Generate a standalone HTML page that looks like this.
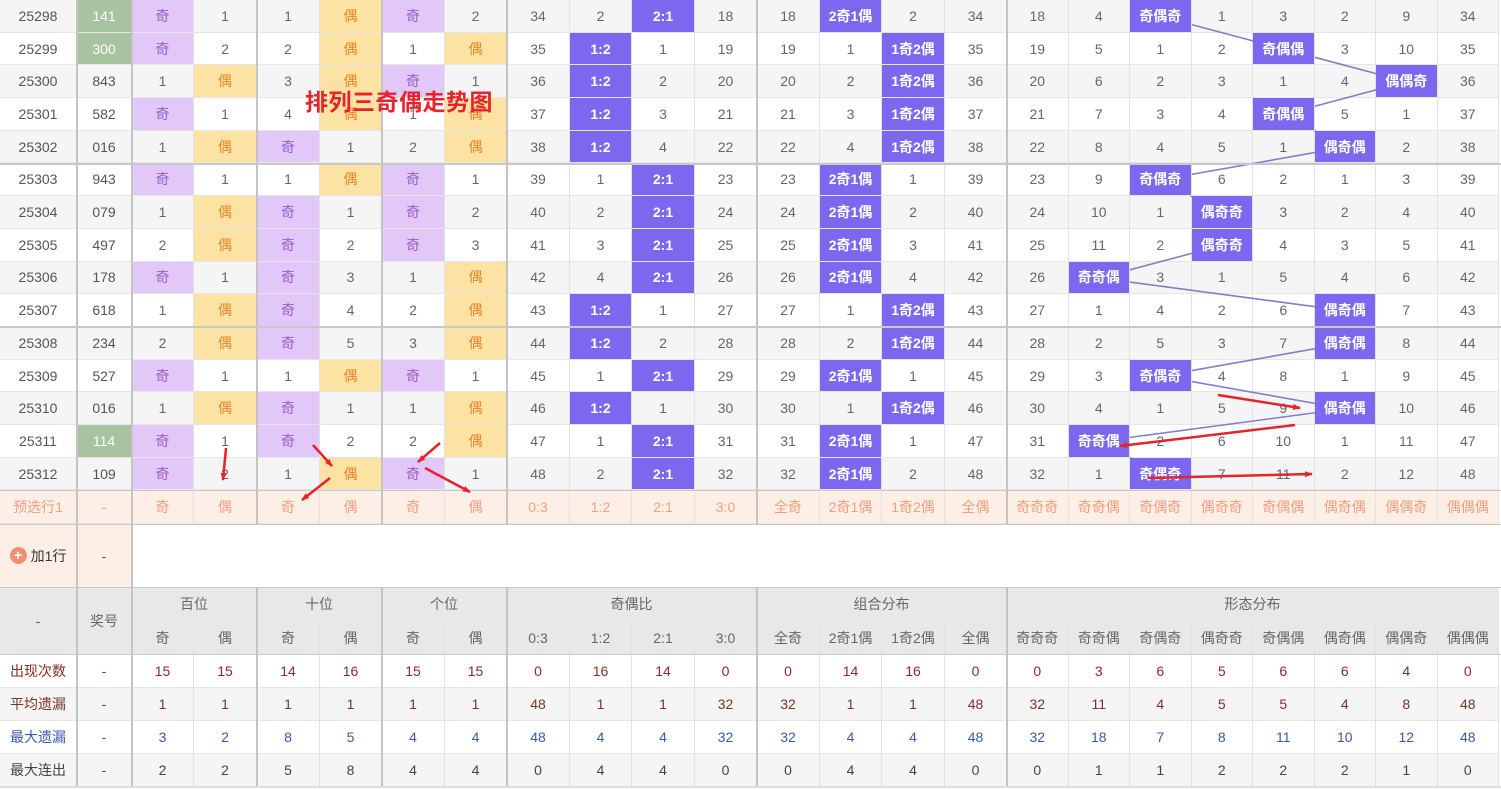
<!DOCTYPE html><html><head><meta charset="utf-8"><style>
body{margin:0;width:1501px;height:789px;overflow:hidden;background:#fff;font-family:"Liberation Sans","Noto Sans CJK SC",sans-serif;font-size:14px;color:#666;position:relative}
.c{position:absolute;box-sizing:border-box;display:flex;align-items:center;justify-content:center;border-right:1px solid #e2e2e2;border-bottom:1px solid #e6e6e6;white-space:nowrap}
.vl{position:absolute;width:2px;background:#c4c4c4}
.hl{position:absolute;height:2px;background:#c8c8c8}
</style></head><body>
<div id="t"></div>
<svg id="ln" width="1501" height="789" style="position:absolute;left:0;top:0;z-index:2"></svg>
<div style="position:absolute;left:305px;top:83px;color:#e8222a;font-weight:bold;font-size:23px;letter-spacing:0.5px;z-index:6">排列三奇偶走势图</div>
<svg width="1501" height="789" style="position:absolute;left:0;top:0;z-index:7">
<defs><marker id="a" markerWidth="8" markerHeight="6" refX="7" refY="3" orient="auto" markerUnits="userSpaceOnUse"><path d="M0,0L8,3L0,6z" fill="#e8222a"/></marker></defs>
<g stroke="#e8222a" stroke-width="2.5" fill="none" marker-end="url(#a)">
<line x1="226" y1="448" x2="223" y2="480"/>
<line x1="313" y1="445" x2="332" y2="466"/>
<line x1="330" y1="478" x2="302" y2="500"/>
<line x1="440" y1="443" x2="418" y2="462"/>
<line x1="425" y1="468" x2="470" y2="492"/>
<line x1="1218" y1="395" x2="1300" y2="408"/>
<line x1="1295" y1="425" x2="1120" y2="446"/>
<line x1="1148" y1="478" x2="1312" y2="474"/>
</g></svg>
<script>
var T=document.getElementById('t'),H='';
var X=[0,77,132,194,257,320,382,445,507,570,632,695,757,820,882,945,1007];
for(var i=1;i<=8;i++)X.push(1007+61.5*i);
function cell(x,y,w,h,txt,bg,col,ex){H+='<div class="c" style="left:'+x+'px;top:'+y+'px;width:'+w+'px;height:'+h+'px;'+(bg?'background:'+bg+';':'')+(col?'color:'+col+';':'')+(ex||'')+'">'+txt+'</div>';}
var D=[
["25298","141","奇,1,1,偶,奇,2,34,2,*2:1,18,18,*2奇1偶,2,34,18,4,*奇偶奇,1,3,2,9,34"],
["25299","300","奇,2,2,偶,1,偶,35,*1:2,1,19,19,1,*1奇2偶,35,19,5,1,2,*奇偶偶,3,10,35"],
["25300","843","1,偶,3,偶,奇,1,36,*1:2,2,20,20,2,*1奇2偶,36,20,6,2,3,1,4,*偶偶奇,36"],
["25301","582","奇,1,4,偶,1,偶,37,*1:2,3,21,21,3,*1奇2偶,37,21,7,3,4,*奇偶偶,5,1,37"],
["25302","016","1,偶,奇,1,2,偶,38,*1:2,4,22,22,4,*1奇2偶,38,22,8,4,5,1,*偶奇偶,2,38"],
["25303","943","奇,1,1,偶,奇,1,39,1,*2:1,23,23,*2奇1偶,1,39,23,9,*奇偶奇,6,2,1,3,39"],
["25304","079","1,偶,奇,1,奇,2,40,2,*2:1,24,24,*2奇1偶,2,40,24,10,1,*偶奇奇,3,2,4,40"],
["25305","497","2,偶,奇,2,奇,3,41,3,*2:1,25,25,*2奇1偶,3,41,25,11,2,*偶奇奇,4,3,5,41"],
["25306","178","奇,1,奇,3,1,偶,42,4,*2:1,26,26,*2奇1偶,4,42,26,*奇奇偶,3,1,5,4,6,42"],
["25307","618","1,偶,奇,4,2,偶,43,*1:2,1,27,27,1,*1奇2偶,43,27,1,4,2,6,*偶奇偶,7,43"],
["25308","234","2,偶,奇,5,3,偶,44,*1:2,2,28,28,2,*1奇2偶,44,28,2,5,3,7,*偶奇偶,8,44"],
["25309","527","奇,1,1,偶,奇,1,45,1,*2:1,29,29,*2奇1偶,1,45,29,3,*奇偶奇,4,8,1,9,45"],
["25310","016","1,偶,奇,1,1,偶,46,*1:2,1,30,30,1,*1奇2偶,46,30,4,1,5,9,*偶奇偶,10,46"],
["25311","114","奇,1,奇,2,2,偶,47,1,*2:1,31,31,*2奇1偶,1,47,31,*奇奇偶,2,6,10,1,11,47"],
["25312","109","奇,2,1,偶,奇,1,48,2,*2:1,32,32,*2奇1偶,2,48,32,1,*奇偶奇,7,11,2,12,48"]];
var RH=32.7,pts=[];
D.forEach(function(r,i){var y=i*RH,bg=i%2?'#fff':'#f5f5f5';
cell(0,y,77,RH,r[0],bg,'#555');
var g=(r[0]=='25298'||r[0]=='25299'||r[0]=='25311');
cell(77,y,55,RH,r[1],g?'#a8c3a0':bg,g?'#fff':'#555');
r[2].split(',').forEach(function(v,j){var x=X[j+2],w=X[j+3]-x;
if(v[0]=='*'){cell(x,y,w,RH,v.slice(1),'#7b68ee','#fff','font-weight:bold;z-index:3;');if(j>=14)pts.push([x+w/2,y+RH/2]);}
else if(v=='奇'&&j<6)cell(x,y,w,RH,v,'#e2c8f8','#9a5cc8');
else if(v=='偶'&&j<6)cell(x,y,w,RH,v,'#fde3a3','#e8852a');
else cell(x,y,w,RH,v,bg,'#666');});});
var y0=15*RH;
cell(0,y0,77,33,'预选行1','#fdeee6','#f0a080');cell(77,y0,55,33,'-','#fdeee6','#f0a080');
"奇,偶,奇,偶,奇,偶,0:3,1:2,2:1,3:0,全奇,2奇1偶,1奇2偶,全偶,奇奇奇,奇奇偶,奇偶奇,偶奇奇,奇偶偶,偶奇偶,偶偶奇,偶偶偶".split(',').forEach(function(v,j){cell(X[j+2],y0,X[j+3]-X[j+2],33,v,'#fdeee6','#f0a080');});
var y1=y0+34;
cell(0,y1,77,63,'<span style="display:inline-block;width:17px;height:17px;border-radius:50%;background:#f09070;color:#fff;font-weight:bold;line-height:17px;text-align:center;margin-right:4px">+</span><span style="color:#333">加1行</span>','#fdeee6','#333');
cell(77,y1,55,63,'-','#fdeee6','#555');
var y2=588;
cell(0,y2,77,67,'-','#e8e8e8','#555');cell(77,y2,55,67,'奖号','#e8e8e8','#666');
[['百位',2,4],['十位',4,6],['个位',6,8],['奇偶比',8,12],['组合分布',12,16],['形态分布',16,24]].forEach(function(g){cell(X[g[1]],y2,X[g[2]]-X[g[1]],33,g[0],'#e8e8e8','#666');});
"奇,偶,奇,偶,奇,偶,0:3,1:2,2:1,3:0,全奇,2奇1偶,1奇2偶,全偶,奇奇奇,奇奇偶,奇偶奇,偶奇奇,奇偶偶,偶奇偶,偶偶奇,偶偶偶".split(',').forEach(function(v,j){cell(X[j+2],y2+33,X[j+3]-X[j+2],34,v,'#e8e8e8','#666');});
var S=[['出现次数','#8b2a2a','15,15,14,16,15,15,0,16,14,0,0,14,16,0,0,3,6,5,6,6,4,0'],
['平均遗漏','#7a3328','1,1,1,1,1,1,48,1,1,32,32,1,1,48,32,11,4,5,5,4,8,48'],
['最大遗漏','#3a5aa8','3,2,8,5,4,4,48,4,4,32,32,4,4,48,32,18,7,8,11,10,12,48'],
['最大连出','#444','2,2,5,8,4,4,0,4,4,0,0,4,4,0,0,1,1,2,2,2,1,0']];
S.forEach(function(s,i){var y=655+i*33,bg=i%2?'#f5f5f5':'#fff';cell(0,y,77,33,s[0],bg,s[1]);cell(77,y,55,33,'-',bg,s[1]);
s[2].split(',').forEach(function(v,j){cell(X[j+2],y,X[j+3]-X[j+2],33,v,bg,s[1]);});});
[76,131].forEach(function(x){H+='<div class="vl" style="left:'+x+'px;top:0;height:787px;z-index:4"></div>';});
[256,381,506,756,1006].forEach(function(x){H+='<div class="vl" style="left:'+x+'px;top:0;height:'+(y0+33)+'px;z-index:4"></div><div class="vl" style="left:'+x+'px;top:588px;height:199px;z-index:4"></div>';});
[5,10].forEach(function(k){H+='<div class="hl" style="left:0;top:'+(k*RH-1)+'px;width:1501px;z-index:4"></div>';});
H+='<div class="hl" style="left:0;top:'+(y0-1)+'px;width:1501px;height:1px;z-index:4"></div>';
H+='<div class="hl" style="left:0;top:'+(y0+33)+'px;width:1501px;height:1px;z-index:4"></div>';
H+='<div class="hl" style="left:0;top:587px;width:1501px;height:1px;z-index:4"></div>';
H+='<div class="hl" style="left:0;top:654px;width:1501px;height:1px;z-index:4"></div>';
H+='<div class="hl" style="left:0;top:786px;width:1501px;height:2px;background:#ddd;z-index:4"></div>';
T.innerHTML=H;
var p=pts.map(function(q){return q[0]+','+q[1]}).join(' ');
document.getElementById('ln').innerHTML='<polyline points="'+p+'" fill="none" stroke="#7f7fc8" stroke-width="1.6"/>';
</script>
</body></html>
